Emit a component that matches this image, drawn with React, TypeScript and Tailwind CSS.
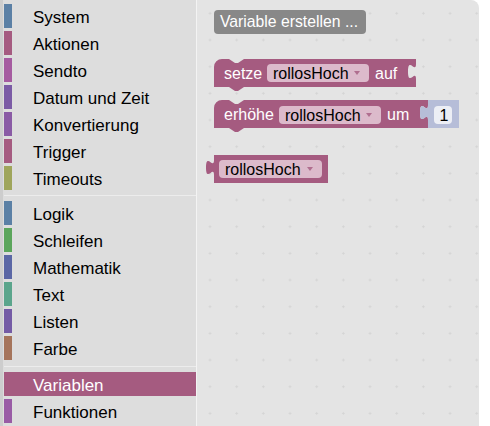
import React from 'react';

type Category = { name: string; color: string; selected?: boolean };

const groups: Category[][] = [
  [
    { name: 'System', color: '#5b80a5' },
    { name: 'Aktionen', color: '#a55b80' },
    { name: 'Sendto', color: '#a55ba0' },
    { name: 'Datum und Zeit', color: '#7b5ba5' },
    { name: 'Konvertierung', color: '#8a5ba5' },
    { name: 'Trigger', color: '#a55b80' },
    { name: 'Timeouts', color: '#9fa55b' },
  ],
  [
    { name: 'Logik', color: '#5b80a5' },
    { name: 'Schleifen', color: '#5ba55b' },
    { name: 'Mathematik', color: '#5b67a5' },
    { name: 'Text', color: '#5ba58c' },
    { name: 'Listen', color: '#745ba5' },
    { name: 'Farbe', color: '#a5745b' },
  ],
  [
    { name: 'Variablen', color: '#a55b80', selected: true },
    { name: 'Funktionen', color: '#995ba5' },
  ],
];

const font = { fontFamily: '"Liberation Sans", Arial, sans-serif' };
const BLOCK = '#a55b80';
const FIELD = '#dcbacb';

function Row({ cat }: { cat: Category }) {
  return (
    <div
      className={
        'flex h-[24px] mb-[3px] items-center ' +
        (cat.selected ? 'bg-[#a55b80] text-white' : 'text-black')
      }
    >
      <span className="h-full w-[8px] shrink-0" style={{ background: cat.color }} />
      <span className="ml-[21px] pt-[2px] text-[17px] leading-none">{cat.name}</span>
    </div>
  );
}

function Dropdown({ x, y, w }: { x: number; y: number; w: number }) {
  return (
    <g>
      <rect x={x} y={y} width={w} height={18} rx={4} fill={FIELD} />
      <text x={x + 6} y={y + 14.5} fontSize="16" fill="#000">
        rollosHoch
      </text>
      <path d={`M${x + w - 15},${y + 7} h6 l-3,4 z`} fill={BLOCK} opacity="0.8" />
    </g>
  );
}

function Flyout() {
  // statement block with top notch, bottom tab and optional right input
  const setze =
    'M214,67 a8,8 0 0 1 8,-8 H229 l6,4 3,0 6,-4 H416 V64 ' +
    'c0,10 -8,-8 -8,7.5 s8,-2.5 8,7.5 V87 H244 l-6,4 -3,0 -6,-4 H214 Z';
  const erhoehe =
    'M214,108 a8,8 0 0 1 8,-8 H229 l6,4 3,0 6,-4 H428 V105 ' +
    'c0,10 -8,-8 -8,7.5 s8,-2.5 8,7.5 V128 H244 l-6,4 -3,0 -6,-4 H214 Z';
  const num =
    'M428,100 H459 V128 H428 V120 c0,-10 -8,8 -8,-7.5 s8,2.5 8,-7.5 Z';
  const get =
    'M214,155 H328 V183 H214 V175 c0,-10 -8,8 -8,-7.5 s8,2.5 8,-7.5 Z';

  return (
    <svg
      className="absolute inset-0"
      width={282}
      height={426}
      viewBox="197 0 282 426"
      style={font}
    >
      <defs>
        <pattern
          id="grid"
          x={196.67}
          y={0}
          width={26.67}
          height={26.67}
          patternUnits="userSpaceOnUse"
        >
          <path d="M12,13.33 h2.67 M13.33,12 v2.67" stroke="#d4d4d4" strokeWidth="1" />
        </pattern>
      </defs>
      <rect x={197} y={0} width={282} height={426} fill="url(#grid)" />

      <rect x={214} y={10} width={152} height={24} rx={4} fill="#888" />
      <text x={220} y={27} fontSize="15.75" fill="#fff">
        Variable erstellen ...
      </text>

      <path d={setze} fill={BLOCK} />
      <text x={224} y={78.5} fontSize="16" fill="#fff">setze</text>
      <Dropdown x={267} y={64} w={102} />
      <text x={375} y={78.5} fontSize="16" fill="#fff">auf</text>

      <path d={erhoehe} fill={BLOCK} />
      <text x={224} y={119.5} fontSize="16" fill="#fff">erhöhe</text>
      <Dropdown x={279} y={106} w={102} />
      <text x={387} y={119.5} fontSize="16" fill="#fff">um</text>
      <path d={num} fill="#b6bdd8" />
      <rect x={434} y={106} width={18} height={18} rx={4} fill="#eceef5" />
      <text x={439.5} y={120.5} fontSize="16" fill="#000">1</text>

      <path d={get} fill={BLOCK} />
      <Dropdown x={219} y={160} w={103} />
    </svg>
  );
}

export default function App() {
  return (
    <div className="flex h-[426px] w-[490px] bg-white" style={font}>
      <div className="flex w-[196px] shrink-0 flex-col border-l-[3px] border-[#cdcdcd] bg-[#dddddd] pl-px pt-1">
        {groups.map((g, i) => (
          <div key={i}>
            {i > 0 && (
              <div
                className={
                  'h-px bg-[#ececec] mb-[5px] ' + (i === 1 ? 'mt-[2px]' : 'mt-[3px]')
                }
              />
            )}
            {g.map((c) => (
              <Row key={c.name} cat={c} />
            ))}
          </div>
        ))}
      </div>
      <div className="w-px bg-[#f3f3f3]" />
      <div className="relative h-full w-[282px] overflow-hidden rounded-tr-[8px] bg-[#e4e4e4]">
        <Flyout />
      </div>
    </div>
  );
}
